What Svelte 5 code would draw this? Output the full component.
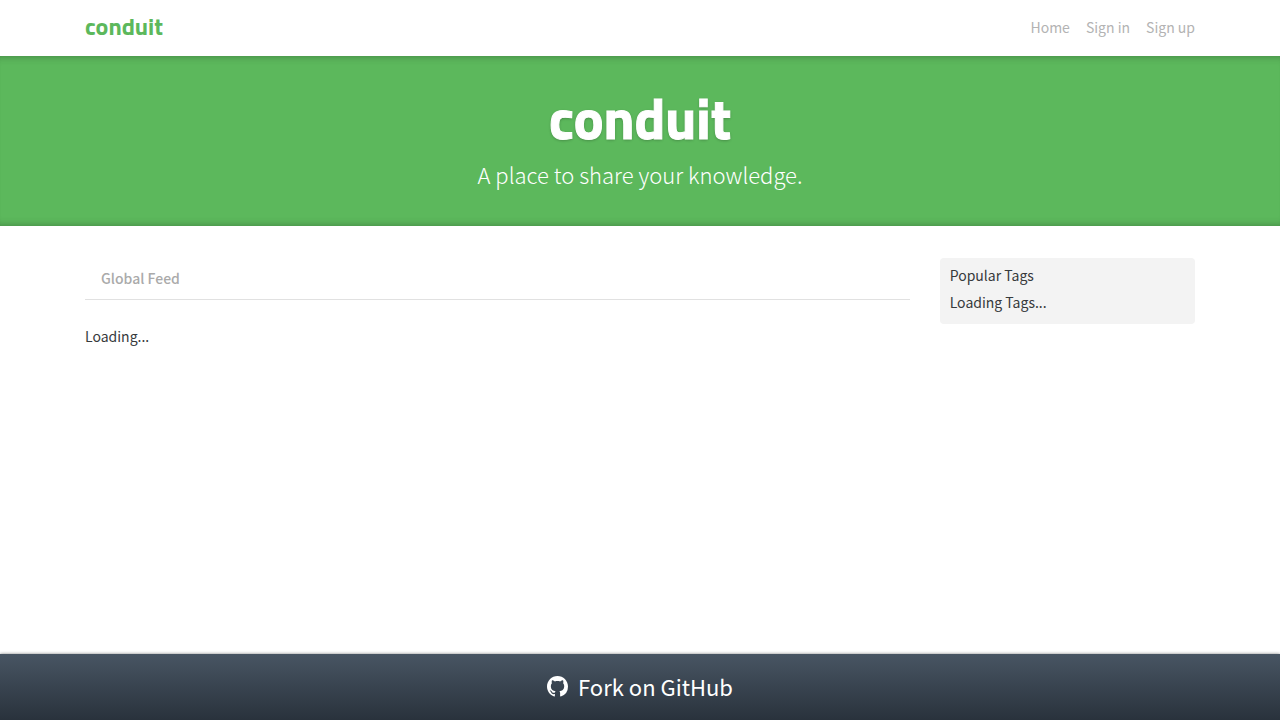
<script>
  const links = ['Home', 'Sign in', 'Sign up'];
</script>

<svelte:head><title>Conduit</title></svelte:head>

<div class="page">
  <nav class="container navbar">
    <a class="brand" href="#/">conduit</a>
    <ul>
      {#each links as link}
        <li><a href="#/">{link}</a></li>
      {/each}
    </ul>
  </nav>

  <header class="banner">
    <h1>conduit</h1>
    <p>A place to share your knowledge.</p>
  </header>

  <main class="container content">
    <section class="feed">
      <div class="tabs"><a href="#/">Global Feed</a></div>
      <p class="loading">Loading...</p>
    </section>
    <aside class="tags">
      <p>Popular Tags</p>
      <p>Loading Tags...</p>
    </aside>
  </main>

  <footer>
    <a href="#/">
      <svg viewBox="0 0 16 16" aria-hidden="true"><path d="M8 0C3.58 0 0 3.58 0 8c0 3.54 2.29 6.53 5.47 7.59.4.07.55-.17.55-.38 0-.19-.01-.82-.01-1.49-2.01.37-2.53-.49-2.69-.94-.09-.23-.48-.94-.82-1.13-.28-.15-.68-.52-.01-.53.63-.01 1.08.58 1.23.82.72 1.21 1.87.87 2.33.66.07-.52.28-.87.51-1.07-1.78-.2-3.64-.89-3.64-3.95 0-.87.31-1.59.82-2.15-.08-.2-.36-1.02.08-2.12 0 0 .67-.21 2.2.82.64-.18 1.32-.27 2-.27s1.36.09 2 .27c1.53-1.04 2.2-.82 2.2-.82.44 1.1.16 1.92.08 2.12.51.56.82 1.27.82 2.15 0 3.07-1.87 3.75-3.65 3.95.29.25.54.73.54 1.48 0 1.07-.01 1.93-.01 2.2 0 .21.15.46.55.38A8.01 8.01 0 0 0 16 8c0-4.42-3.58-8-8-8z" /></svg>
      <span>Fork on GitHub</span>
    </a>
  </footer>
</div>

<style>
  :global(body) { margin: 0; background: #fff; }
  .page {
    min-height: 100vh;
    display: flex;
    flex-direction: column;
    color: #373a3c;
    font: 14px/24px "Noto Sans CJK SC", sans-serif;
  }
  p, h1, ul { margin: 0; padding: 0; }
  a { color: inherit; text-decoration: none; }
  .container {
    width: 100%;
    max-width: 1140px;
    margin: 0 auto;
    padding: 0 15px;
    box-sizing: border-box;
  }
  .navbar {
    display: flex;
    justify-content: space-between;
    align-items: center;
    padding-top: 14px;
    padding-bottom: 16px;
  }
  .brand {
    padding-bottom: 2px;
    color: #5cb85c;
    font: 700 24px/24px "Titillium Web", "Noto Sans", sans-serif;
  }
  .navbar ul { display: flex; gap: 16px; list-style: none; color: #b3b3b3; }
  .banner {
    padding: 32px;
    text-align: center;
    color: #fff;
    background: #5cb85c;
    box-shadow: inset 0 8px 8px -8px rgba(0, 0, 0, 0.3), inset 0 -8px 8px -8px rgba(0, 0, 0, 0.3);
  }
  h1 {
    padding-bottom: 8px;
    font: 700 56px/62px "Titillium Web", "Noto Sans", sans-serif;
    -webkit-text-stroke: 1px currentColor;
    text-shadow: 0 1px 3px rgba(0, 0, 0, 0.3);
  }
  .banner p { padding-bottom: 4px; font-size: 22px; line-height: 32px; font-weight: 300; }
  .content { display: flex; align-items: flex-start; gap: 30px; padding-top: 32px; flex: 1; }
  .feed { flex: 1; }
  .tabs { border-bottom: 1px solid #e1e1e1; padding: 8px 16px 9px; color: #aaa; font-weight: 500; }
  .loading { padding-top: 24px; }
  .tags {
    display: grid;
    gap: 3px;
    width: 23%;
    box-sizing: border-box;
    padding: 5px 10px 10px;
    border-radius: 4px;
    background: #f3f3f3;
  }
  footer {
    padding: 14px 15px 16px;
    text-align: center;
    color: #fff;
    background: linear-gradient(#485563, #29323c);
    box-shadow: 0 0 3px rgba(0, 0, 0, 0.5);
  }
  footer a { display: inline-flex; align-items: center; gap: 10px; font-size: 22px; line-height: 36px; vertical-align: top; }
  footer svg { width: 21px; height: 21px; fill: currentColor; }
</style>
